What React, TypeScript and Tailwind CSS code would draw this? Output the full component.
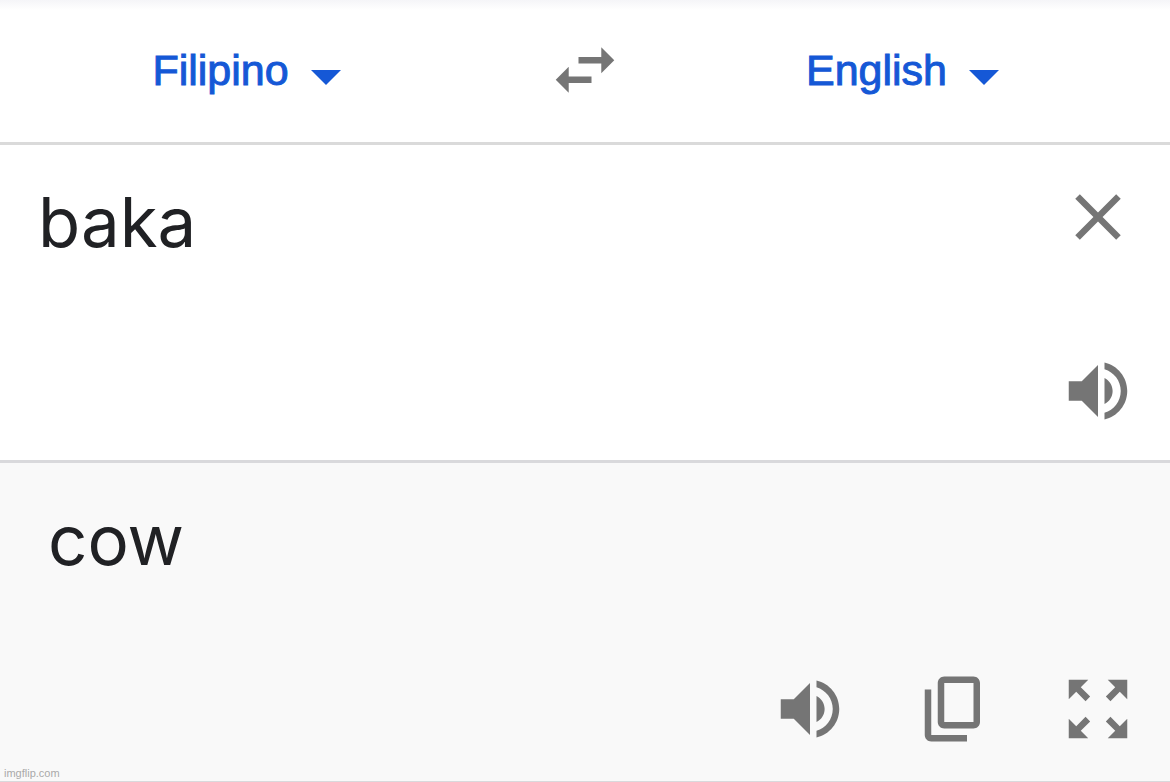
import { useState } from "react";
import type { ReactNode } from "react";
import clsx from "clsx";

const LANGUAGES = ["Filipino", "English"];

const ICONS = {
  swap: "M6.99 11L3 15l3.99 4v-3H14v-2H6.99v-3zM21 9l-3.99-4v3H10v2h7.01v3L21 9z",
  close:
    "M19 6.41L17.59 5 12 10.59 6.41 5 5 6.41 10.59 12 5 17.59 6.41 19 12 13.41 17.59 19 19 17.59 13.41 12z",
  volume:
    "M3 9v6h4l5 5V4L7 9H3zm13.5 3c0-1.77-1.02-3.29-2.5-4.03v8.05c1.48-.73 2.5-2.25 2.5-4.02zM14 3.23v2.06c2.89.86 5 3.54 5 6.71s-2.11 5.85-5 6.71v2.06c4.01-.91 7-4.49 7-8.77s-2.99-7.86-7-8.77z",
  copy: "M18 2H9c-1.1 0-2 .9-2 2v12c0 1.1.9 2 2 2h9c1.1 0 2-.9 2-2V4c0-1.1-.9-2-2-2zm0 14H9V4h9v12zM3 6v14c0 1.1.9 2 2 2h11v-2H5V6H3z",
  expand:
    "M15 3l2.3 2.3-2.89 2.87 1.42 1.42L18.7 6.7 21 9V3h-6zM3 9l2.3-2.3 2.87 2.89 1.42-1.42L6.7 5.3 9 3H3v6zm6 12l-2.3-2.3 2.89-2.87-1.42-1.42L5.3 17.3 3 15v6h6zm12-6l-2.3 2.3-2.87-2.89-1.42 1.42 2.89 2.87L15 21h6v-6z",
};

export default function App() {
  const [from, setFrom] = useState("Filipino");
  const [to, setTo] = useState("English");
  const [text, setText] = useState("baka");

  const swap = () => {
    setFrom(to);
    setTo(from);
  };

  return (
    <main className="relative flex flex-col min-h-screen bg-white font-['Liberation_Sans',Arial,sans-serif]">
      <header className="flex items-center h-[145px] pb-0.5 border-b-3 border-[#dadada] bg-linear-to-b from-[#f5f5f8] to-white to-[10px]">
        <div className="flex flex-1 justify-center pr-8">
          <LanguageSelect label="Source language" value={from} onChange={setFrom} />
        </div>
        <IconButton label="Swap languages" icon="swap" onClick={swap} />
        <div className="flex flex-1 justify-center pl-8">
          <LanguageSelect label="Target language" value={to} onChange={setTo} />
        </div>
      </header>

      <Panel className="h-[318px] border-b-3 border-[#d9d9dc] pl-[38px] pb-[30px]">
        <textarea
          aria-label="Source text"
          value={text}
          onChange={(e) => setText(e.target.value)}
          className="flex-1 min-w-0 resize-none outline-none bg-transparent"
        />
        <div className="flex flex-col justify-between">
          <IconButton label="Clear text" icon="close" onClick={() => setText("")} />
          <IconButton label="Listen to source text" icon="volume" />
        </div>
      </Panel>

      <Panel className="flex-1 flex-col justify-between border-b border-[#d9d9dc] bg-[#f9f9f9] pl-12 pb-[33px]">
        <p>cow</p>
        <div className="flex justify-end gap-[66px]">
          <IconButton label="Listen to translation" icon="volume" />
          <IconButton label="Copy translation" icon="copy" />
          <IconButton label="Full screen" icon="expand" />
        </div>
      </Panel>

      <small className="absolute bottom-px left-1 text-[11px] leading-4 text-[#a9a9a9]">
        imgflip.com
      </small>
    </main>
  );
}

const Panel = ({
  className,
  children,
}: {
  className: string;
  children: ReactNode;
}) => {
  return (
    <section
      className={clsx(
        "flex pt-[33px] pr-[33px] font-[Inter,sans-serif] text-[69px] leading-[88px] text-[#202124]",
        className
      )}
    >
      {children}
    </section>
  );
};

const LanguageSelect = ({
  label,
  value,
  onChange,
}: {
  label: string;
  value: string;
  onChange: (v: string) => void;
}) => {
  // the select and its arrow share one grid cell
  return (
    <div className="grid items-center text-[#1558d6]">
      <select
        aria-label={label}
        value={value}
        onChange={(e) => onChange(e.target.value)}
        className="col-start-1 row-start-1 appearance-none field-sizing-content pr-[73px] text-[43px] leading-[56px] [-webkit-text-stroke:1px_#1558d6] outline-none cursor-pointer"
      >
        {LANGUAGES.map((v) => (
          <option key={v}>{v}</option>
        ))}
      </select>
      <svg
        viewBox="0 0 24 24"
        fill="currentColor"
        className="col-start-1 row-start-1 justify-self-end mt-3 size-[72px] pointer-events-none"
      >
        <path d="M7 10l5 5 5-5z" />
      </svg>
    </div>
  );
};

const IconButton = ({
  label,
  icon,
  onClick,
}: {
  label: string;
  icon: keyof typeof ICONS;
  onClick?: () => void;
}) => {
  return (
    <button
      type="button"
      aria-label={label}
      onClick={onClick}
      className="block shrink-0 text-[#757575] cursor-pointer"
    >
      <svg viewBox="0 0 24 24" fill="currentColor" className="size-[78px]">
        <path d={ICONS[icon]} />
      </svg>
    </button>
  );
};
